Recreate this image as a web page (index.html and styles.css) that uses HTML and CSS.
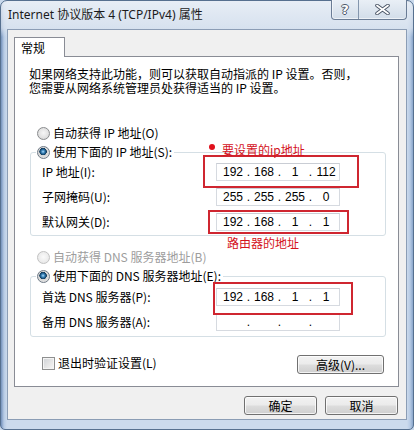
FILE: index.html
```html
<!DOCTYPE html>
<html lang="zh-CN">
<head>
<meta charset="utf-8">
<title>Internet 协议版本 4 (TCP/IPv4) 属性</title>
<link rel="stylesheet" href="styles.css">
</head>
<body>
<div class="window">
  <div class="titlebar">
    <span class="title">Internet 协议版本 4 (TCP/IPv4) 属性</span>
    <div class="caption">
      <span class="cbtn help">?</span>
      <span class="cbtn close">
        <svg width="15" height="11" viewBox="0 0 15 11">
          <path d="M2 1.5 L13 9.5 M13 1.5 L2 9.5" stroke="#4a5566" stroke-width="3.6" stroke-linecap="round" fill="none"/>
          <path d="M2 1.5 L13 9.5 M13 1.5 L2 9.5" stroke="#ffffff" stroke-width="1.8" stroke-linecap="round" fill="none"/>
        </svg>
      </span>
    </div>
  </div>
  <div class="client">
    <div class="tabs"><div class="tab">常规</div></div>
    <div class="panel">
      <p class="intro"><span class="line">如果网络支持此功能，则可以获取自动指派的 IP 设置。否则，</span><span class="line">您需要从网络系统管理员处获得适当的 IP 设置。</span></p>

      <div class="opt first"><span class="radio"></span><span>自动获得 IP 地址(O)</span></div>
      <fieldset class="group g1">
        <legend class="opt"><span class="radio on"></span><span>使用下面的 IP 地址(S):</span></legend>
        <div class="grid">
          <span class="lbl">IP 地址(I):</span>
          <div class="ip"><span class="n">192</span><span class="d">.</span><span class="n">168</span><span class="d">.</span><span class="n">1</span><span class="d">.</span><span class="n">112</span></div>
          <span class="lbl">子网掩码(U):</span>
          <div class="ip"><span class="n">255</span><span class="d">.</span><span class="n">255</span><span class="d">.</span><span class="n">255</span><span class="d">.</span><span class="n">0</span></div>
          <span class="lbl">默认网关(D):</span>
          <div class="ip"><span class="n">192</span><span class="d">.</span><span class="n">168</span><span class="d">.</span><span class="n">1</span><span class="d">.</span><span class="n">1</span></div>
        </div>
      </fieldset>

      <div class="opt second disabled"><span class="radio off"></span><span>自动获得 DNS 服务器地址(B)</span></div>
      <fieldset class="group g2">
        <legend class="opt"><span class="radio on"></span><span>使用下面的 DNS 服务器地址(E):</span></legend>
        <div class="grid">
          <span class="lbl">首选 DNS 服务器(P):</span>
          <div class="ip"><span class="n">192</span><span class="d">.</span><span class="n">168</span><span class="d">.</span><span class="n">1</span><span class="d">.</span><span class="n">1</span></div>
          <span class="lbl">备用 DNS 服务器(A):</span>
          <div class="ip"><span class="n"></span><span class="d">.</span><span class="n"></span><span class="d">.</span><span class="n"></span><span class="d">.</span><span class="n"></span></div>
        </div>
      </fieldset>

      <div class="bottom">
        <label class="chk-row"><span class="check"></span><span>退出时验证设置(L)</span></label>
        <button class="btn adv">高级(V)...</button>
      </div>

      <span class="redbox box1"></span>
      <span class="redbox box2"></span>
      <span class="redbox box3"></span>
      <span class="reddot"></span>
      <span class="note note1">要设置的ip地址</span>
      <span class="note note2">路由器的地址</span>
    </div>
    <div class="actions">
      <button class="btn act">确定</button>
      <button class="btn act">取消</button>
    </div>
  </div>
</div>
</body>
</html>
```
FILE: styles.css
```css
html, body {
  margin: 0;
  padding: 0;
}
body {
  width: 414px;
  height: 430px;
  overflow: hidden;
  font-family: "Noto Sans CJK SC", sans-serif;
  font-size: 12px;
  color: #000;
  background: #c9d9ec;
}

.window {
  box-sizing: border-box;
  width: 414px;
  height: 430px;
  border: 1px solid #56708f;
  border-radius: 7px 7px 5px 5px;
  display: flex;
  flex-direction: column;
  background:
    linear-gradient(to bottom, rgba(236,241,247,0.85) 0, rgba(220,229,240,0.7) 27px, rgba(220,229,240,0) 36px),
    linear-gradient(to right, #7391bb 0, #b7cbe5 3px, #cbdaec 6px, #cbdaec 406px, #b7cbe5 409px, #8aa6cb 412px);
}

/* title bar */
.titlebar {
  height: 28px;
  display: flex;
  align-items: flex-start;
  padding-left: 7px;
  flex: none;
}
.title {
  font-family: "Noto Sans", "Noto Sans CJK SC", sans-serif;
  font-size: 12px;
  line-height: 16px;
  margin-top: 6px;
  color: #1b1b1b;
  white-space: nowrap;
}
.caption {
  display: flex;
  margin: -1px 6px 0 auto;
  height: 19px;
  border: 1px solid #6a7c95;
  border-top: none;
  border-radius: 0 0 4px 4px;
  overflow: hidden;
  background: linear-gradient(to bottom, #e9eff6, #d2dde9);
  box-shadow: inset 0 -1px 0 rgba(255,255,255,0.6), inset 1px 0 0 rgba(255,255,255,0.5);
}
.cbtn {
  display: flex;
  align-items: center;
  justify-content: center;
  height: 100%;
}
.help {
  width: 26px;
  border-right: 1px solid #8496ad;
  font-family: "DejaVu Sans", sans-serif;
  font-weight: bold;
  font-size: 13px;
  color: #fff;
  text-shadow: 1px 0 0 #4d5868, -1px 0 0 #4d5868, 0 1px 0 #4d5868, 0 -1px 0 #4d5868;
}
.close {
  width: 47px;
}

/* client area */
.client {
  box-sizing: border-box;
  margin: 0 6px;
  height: 391px;
  border: 1px solid #8b9db5;
  background: #f0f0f0;
  padding: 7px 7px 0 6px;
  flex: none;
}
.tabs {
  display: flex;
}
.tab {
  box-sizing: border-box;
  width: 51px;
  height: 20px;
  border: 1px solid #898c95;
  border-bottom: none;
  background: #fff;
  padding-left: 6px;
  line-height: 19px;
  margin-bottom: -1px;
  position: relative;
  z-index: 1;
}
.panel {
  position: relative;
  box-sizing: border-box;
  height: 331px;
  border: 1px solid #898c95;
  background: #fff;
  padding: 0 12px 0 14px;
}
.intro {
  margin: 10px 0 0;
  display: flex;
  flex-direction: column;
  white-space: nowrap;
}
.intro .line {
  display: block;
  height: 14px;
  line-height: 14px;
}

.opt {
  display: flex;
  align-items: center;
  height: 16px;
  gap: 3px;
  white-space: nowrap;
  line-height: 16px;
}
.opt.first {
  margin: 30px 0 0 8px;
}
.opt.second {
  margin: 13px 0 0 8px;
}
.opt.disabled {
  color: #9d9d9d;
}

.radio {
  flex: none;
  box-sizing: border-box;
  width: 13px;
  height: 13px;
  border-radius: 50%;
  border: 1px solid #8a8c8e;
  background: radial-gradient(circle at 50% 45%, #f6f6f6 0, #e3e3e3 55%, #cbcbcb 100%);
}
.radio.on {
  border-color: #6f7a86;
  background: radial-gradient(circle at 46% 42%, #b7def6 0, #4a93c9 1.3px, #1d5886 2.6px, #123a5a 3.5px, #d6d6d6 3.9px, #efefef 100%);
}
.radio.off {
  border-color: #c2c2c2;
  background: radial-gradient(circle at 50% 45%, #fafafa 0, #ececec 60%, #dedede 100%);
}

.group {
  margin: 3px 0 0 1px;
  border: 1px solid #d5dfe5;
  border-radius: 3px;
  min-width: 0;
}
.g1 {
  padding: 3px 0 4px 11px;
}
.g2 {
  padding: 4px 0 5px 11px;
}
.group legend {
  padding: 0 2px 0 1px;
  margin-left: -6px;
}
.grid {
  display: grid;
  grid-template-columns: 174px 124px;
  row-gap: 7px;
  align-items: center;
}
.lbl {
  white-space: nowrap;
  line-height: 16px;
}
.ip {
  box-sizing: border-box;
  height: 18px;
  border: 1px solid #d6dae0;
  border-top-color: #c9cdd4;
  background: #fff;
  display: flex;
  padding-left: 3px;
  font-family: "Liberation Sans", sans-serif;
  font-size: 12px;
  line-height: 16px;
}
.ip .n {
  width: 26px;
  text-align: center;
}
.ip .d {
  width: 5px;
  text-align: center;
}

.bottom {
  display: flex;
  align-items: center;
  justify-content: space-between;
  margin: 18px 2px 0 13px;
  height: 19px;
}
.chk-row {
  display: flex;
  align-items: center;
  gap: 3px;
  line-height: 16px;
  margin-bottom: 3px;
}
.check {
  flex: none;
  box-sizing: border-box;
  width: 13px;
  height: 13px;
  border: 1px solid #8e8f8f;
  background: linear-gradient(135deg, #cfd2d6 0, #e8e8e8 60%, #f8f8f8 100%);
  box-shadow: inset 0 0 0 1px #f4f4f4;
}

.btn {
  box-sizing: border-box;
  height: 19px;
  border: 1px solid #707070;
  border-radius: 3px;
  background: linear-gradient(to bottom, #f2f2f2 0%, #ebebeb 48%, #dddddd 52%, #cfcfcf 100%);
  box-shadow: inset 0 0 0 1px rgba(255,255,255,0.75);
  font-family: "Noto Sans CJK SC", sans-serif;
  font-size: 12px;
  line-height: 16px;
  color: #000;
  padding: 0;
  margin: 0;
}
.adv {
  width: 87px;
}
.actions {
  display: flex;
  justify-content: flex-end;
  gap: 8px;
  margin: 9px 1px 0 0;
}
.act {
  width: 73px;
}

/* red annotations laid over the dialog */
.redbox {
  position: absolute;
  box-sizing: border-box;
  border: 2px solid #cf2630;
  pointer-events: none;
}
.box1 { left: 188px; top: 98px; width: 156px; height: 33px; }
.box2 { left: 193px; top: 153px; width: 141px; height: 24px; }
.box3 { left: 198px; top: 225px; width: 140px; height: 33px; }
.reddot {
  position: absolute;
  left: 194px;
  top: 87px;
  width: 6px;
  height: 6px;
  border-radius: 50%;
  background: #e0101c;
}
.note {
  position: absolute;
  color: #d4121c;
  line-height: 16px;
  white-space: nowrap;
}
.note1 { left: 207px; top: 85px; }
.note2 { left: 212px; top: 178px; }
```
